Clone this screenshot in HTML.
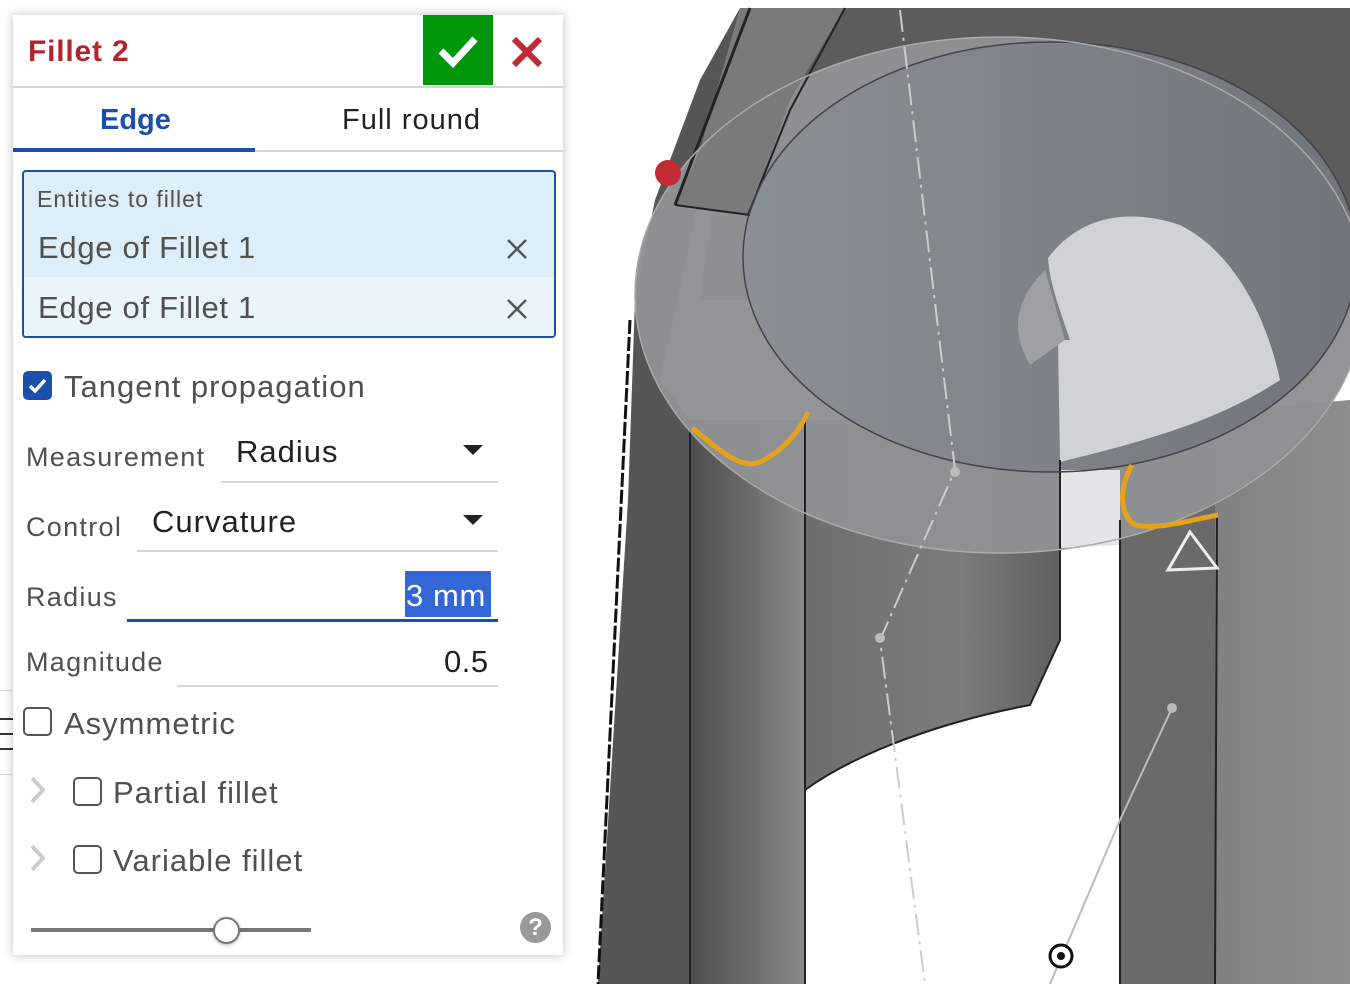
<!DOCTYPE html>
<html><head><meta charset="utf-8"><style>
*{margin:0;padding:0;box-sizing:border-box}
body{width:1350px;height:984px;overflow:hidden;background:#fff;font-family:"Liberation Sans","DejaVu Sans",sans-serif;position:relative}
.a{position:absolute;white-space:nowrap}
#scene{position:absolute;left:0;top:0}
#panel{position:absolute;left:13px;top:15px;width:550px;height:940px;background:#fff;box-shadow:0 0 10px rgba(0,0,0,.25)}
.g{color:#505050}
.d{color:#222}
.b{letter-spacing:1px}
.m{letter-spacing:1.3px}
.ul{position:absolute;height:2px;background:#d6d6d6}
.cb{position:absolute;width:29px;height:29px;border:2px solid #555;border-radius:5px;background:#fff}
.tri{position:absolute;width:0;height:0;border-left:10px solid transparent;border-right:10px solid transparent;border-top:10px solid #222}
</style></head><body>
<svg id="scene" width="1350" height="984" viewBox="0 0 1350 984">
<defs>
<linearGradient id="col" x1="0" x2="1"><stop offset="0" stop-color="#4e4e4e"/><stop offset="0.5" stop-color="#6a6a6a"/><stop offset="1" stop-color="#8a8a8a"/></linearGradient>
<linearGradient id="mid" x1="0" x2="1"><stop offset="0" stop-color="#6e6e6e"/><stop offset="0.6" stop-color="#7c7c7c"/><stop offset="1" stop-color="#5f5f5f"/></linearGradient>
<linearGradient id="rc" x1="0" x2="1"><stop offset="0" stop-color="#5a5a5a"/><stop offset="0.3" stop-color="#7e7e7e"/><stop offset="1" stop-color="#8e8e8e"/></linearGradient>
<linearGradient id="inner" x1="0" x2="1"><stop offset="0" stop-color="#8a9096"/><stop offset="1" stop-color="#6f757b"/></linearGradient>
</defs>
<path d="M740 8 L1350 8 L1350 300 L700 300 Z" fill="#5c5c5c"/>
<path d="M740 8 L700 80 L655 200 L635 300 L628 500 L598 984 L690 984 L690 420 L660 380 Z" fill="#565656"/>
<path d="M690 420 L805 420 L805 984 L690 984 Z" fill="url(#col)"/>
<path d="M805 420 L1060 420 L1060 640 L1030 705 C950 720 860 750 805 790 Z" fill="url(#mid)"/>
<path d="M1120 420 L1350 400 L1350 984 L1120 984 Z" fill="url(#rc)"/>
<path d="M1120 420 L1215 420 L1215 984 L1120 984 Z" fill="#6a6a6a"/>
<ellipse cx="1000" cy="295" rx="365" ry="258" fill="#8e9193" opacity="0.97"/>
<ellipse cx="1050" cy="257" rx="307" ry="215" fill="url(#inner)"/>
<path d="M1048 258 C1080 215 1130 208 1180 225 C1230 250 1265 310 1280 380 C1220 420 1150 440 1060 462 L1058 340 L1070 340 C1060 310 1050 285 1048 258 Z" fill="#cfd3d7"/>
<path d="M1045 270 C1015 300 1010 330 1030 365 L1065 340 Z" fill="#9da1a5"/>
<path d="M1060 470 L1120 470 L1120 545 L1060 548 Z" fill="#e3e6e8"/>
<path d="M740 8 L845 8 L790 100 L750 215 L675 205 L700 150 Z" fill="#7a7a7a"/>
<path d="M675 205 L750 215" stroke="#222" stroke-width="2"/>
<path d="M750 8 L675 205" stroke="#222" stroke-width="3"/>
<path d="M845 8 L790 110 L748 215" stroke="#222" stroke-width="2" fill="none"/>
<path d="M630 320 L598 984" stroke="#111" stroke-width="3" stroke-dasharray="14 3"/>
<path d="M690 430 L690 984" stroke="#222" stroke-width="2"/>
<path d="M805 420 L805 984" stroke="#222" stroke-width="2"/>
<path d="M805 790 C860 750 950 720 1030 705 L1060 640 L1060 460" stroke="#222" stroke-width="2" fill="none"/>
<path d="M1120 520 L1120 984" stroke="#222" stroke-width="2"/>
<path d="M1217 515 L1215 984" stroke="#222" stroke-width="2"/>
<ellipse cx="1050" cy="257" rx="307" ry="215" fill="none" stroke="#444" stroke-width="1.5"/>
<ellipse cx="1000" cy="295" rx="365" ry="258" fill="none" stroke="#aaa" stroke-width="1.5"/>
<path d="M900 10 L955 470 L880 640 L925 984" stroke="#ccc" stroke-width="2" stroke-dasharray="22 6 3 6" fill="none"/>
<path d="M1172 708 L1120 820 L1050 984" stroke="#bbb" stroke-width="2" fill="none"/>
<circle cx="955" cy="472" r="5" fill="#bbb"/>
<circle cx="880" cy="638" r="5" fill="#bbb"/>
<circle cx="1172" cy="708" r="5" fill="#bbb"/>
<circle cx="1061" cy="956" r="11" fill="#fff" stroke="#111" stroke-width="3"/>
<circle cx="1061" cy="956" r="4" fill="#111"/>
<path d="M692 428 C720 450 740 470 760 462 C785 450 800 430 808 412" stroke="#e6a21a" stroke-width="5" fill="none"/>
<path d="M1132 465 C1118 490 1120 515 1135 525 C1160 530 1190 520 1218 515" stroke="#e6a21a" stroke-width="5" fill="none"/>
<path d="M1190 532 L1217 568 L1168 570 Z" fill="none" stroke="#eee" stroke-width="3"/>
<circle cx="668" cy="173" r="13" fill="#c42b35"/>
</svg>

<div style="position:absolute;left:0;top:690px;width:42px;height:85px;border:1px solid #ddd;border-left:none;background:#fff"></div>
<div style="position:absolute;left:0;top:718px;width:14px;height:2px;background:#333"></div>
<div style="position:absolute;left:0;top:733px;width:14px;height:2px;background:#333"></div>
<div style="position:absolute;left:0;top:748px;width:14px;height:2px;background:#333"></div>

<div id="panel">
<div class="a" style="left:15px;top:20px;font-size:30px;font-weight:bold;color:#b0252e;letter-spacing:0.8px">Fillet 2</div>
<div class="a" style="left:410px;top:0;width:70px;height:70px;background:#00960a">
<svg width="70" height="70"><path d="M18 36 L30 48 L52 24" stroke="#fff" stroke-width="7" fill="none"/></svg></div>
<svg class="a" style="left:497px;top:20px" width="36" height="36"><path d="M4 4 L30 30 M30 4 L4 30" stroke="#c02a33" stroke-width="6"/></svg>
<div class="ul" style="left:0;top:71px;width:550px"></div>
<div class="a" style="left:87px;top:89px;font-size:29px;color:#1b4fae;font-weight:bold">Edge</div>
<div class="a b" style="left:329px;top:89px;font-size:29px;color:#222">Full round</div>
<div class="ul" style="left:0;top:135px;width:550px"></div>
<div class="a" style="left:0;top:133px;width:242px;height:4px;background:#1b4fae"></div>
<div class="a" style="left:9px;top:155px;width:534px;height:168px;border:2px solid #1b4fae;border-radius:4px;background:#ddeef9;overflow:hidden">
<div class="a" style="left:0;top:105px;width:534px;height:70px;background:#eaf4fb"></div>
<div class="a g b" style="left:13px;top:14px;font-size:23px">Entities to fillet</div>
<div class="a g" style="left:14px;top:58px;font-size:31px;letter-spacing:0.7px">Edge of Fillet 1</div>
<div class="a g" style="left:14px;top:118px;font-size:31px;letter-spacing:0.7px">Edge of Fillet 1</div>
<svg class="a" style="left:482px;top:66px" width="22" height="22"><path d="M2 2 L20 20 M20 2 L2 20" stroke="#555" stroke-width="2.5"/></svg>
<svg class="a" style="left:482px;top:126px" width="22" height="22"><path d="M2 2 L20 20 M20 2 L2 20" stroke="#555" stroke-width="2.5"/></svg>
</div>
<div class="a" style="left:10px;top:356px;width:29px;height:29px;background:#1b4fae;border-radius:5px"><svg width="29" height="29"><path d="M7 15 L12 20 L22 9" stroke="#fff" stroke-width="3.5" fill="none"/></svg></div>
<div class="a g b" style="left:51px;top:354px;font-size:31px">Tangent propagation</div>
<div class="a g m" style="left:13px;top:427px;font-size:27px">Measurement</div>
<div class="a d b" style="left:223px;top:419px;font-size:31px">Radius</div>
<div class="tri" style="left:450px;top:430px"></div>
<div class="ul" style="left:208px;top:466px;width:277px"></div>
<div class="a g m" style="left:13px;top:497px;font-size:27px">Control</div>
<div class="a d b" style="left:139px;top:489px;font-size:31px">Curvature</div>
<div class="tri" style="left:450px;top:500px"></div>
<div class="ul" style="left:124px;top:535px;width:361px"></div>
<div class="a g m" style="left:13px;top:567px;font-size:27px">Radius</div>
<div class="a" style="left:392px;top:556px;width:86px;height:46px;background:#3366d6"></div>
<div class="a" style="left:393px;top:563px;font-size:31px;color:#fff;letter-spacing:0.6px">3 mm</div>
<div class="a" style="left:114px;top:604px;width:371px;height:3px;background:#1b4fae"></div>
<div class="a g m" style="left:13px;top:632px;font-size:27px">Magnitude</div>
<div class="a d" style="left:431px;top:629px;font-size:31px;letter-spacing:0.5px">0.5</div>
<div class="ul" style="left:164px;top:670px;width:321px"></div>
<div class="cb" style="left:10px;top:692px"></div>
<div class="a g b" style="left:51px;top:691px;font-size:31px">Asymmetric</div>
<svg class="a" style="left:15px;top:760px" width="20" height="30"><path d="M4 3 L15 15 L4 27" stroke="#ccc" stroke-width="4" fill="none"/></svg>
<div class="cb" style="left:60px;top:762px"></div>
<div class="a g b" style="left:100px;top:760px;font-size:31px">Partial fillet</div>
<svg class="a" style="left:15px;top:828px" width="20" height="30"><path d="M4 3 L15 15 L4 27" stroke="#ccc" stroke-width="4" fill="none"/></svg>
<div class="cb" style="left:60px;top:830px"></div>
<div class="a g b" style="left:100px;top:828px;font-size:31px">Variable fillet</div>
<div class="a" style="left:18px;top:913px;width:280px;height:4px;background:#777"></div>
<div class="a" style="left:200px;top:902px;width:27px;height:27px;border-radius:50%;background:#fff;border:2px solid #777;box-shadow:0 1px 3px rgba(0,0,0,.3)"></div>
<div class="a" style="left:507px;top:897px;width:31px;height:31px;border-radius:50%;background:#999;color:#fff;font-size:24px;font-weight:bold;text-align:center;line-height:31px">?</div>
</div>
</body></html>
